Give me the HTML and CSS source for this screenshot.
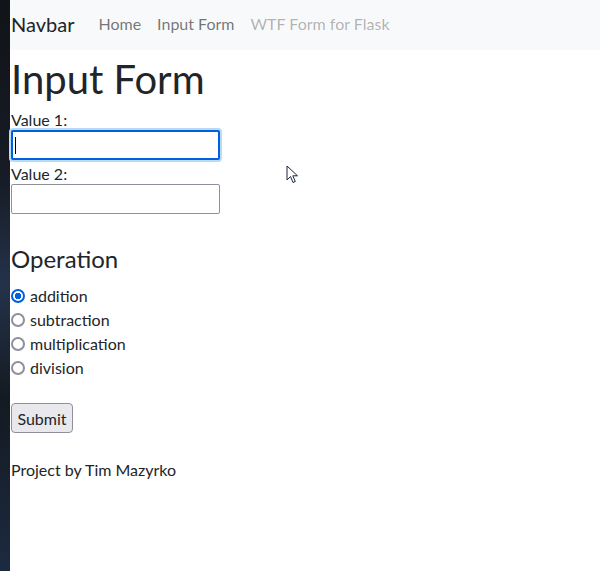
FILE: index.html
```html
<!DOCTYPE html>
<html>
<head>
<meta charset="utf-8">
<link rel="stylesheet" href="styles.css">
</head>
<body>
<div class="strip"></div>
<div class="page">
  <nav class="navbar">
    <span class="brand">Navbar</span>
    <a class="nav-link">Home</a>
    <a class="nav-link">Input Form</a>
    <a class="nav-link disabled">WTF Form for Flask</a>
  </nav>
  <main class="content">
    <h1 class="title">Input Form</h1>
    <form class="form">
      <label class="label first">Value 1:</label>
      <div class="field-wrap">
        <input class="field focused" type="text">
        <span class="caret"></span>
      </div>
      <label class="label">Value 2:</label>
      <input class="field" type="text">
      <h4 class="subtitle">Operation</h4>
      <div class="radios">
        <label class="radio"><input type="radio" name="op" checked> addition</label>
        <label class="radio"><input type="radio" name="op"> subtraction</label>
        <label class="radio"><input type="radio" name="op"> multiplication</label>
        <label class="radio"><input type="radio" name="op"> division</label>
      </div>
      <div class="actions"><button type="button" class="submit">Submit</button></div>
    </form>
    <p class="footer">Project by Tim Mazyrko</p>
  </main>
  <svg class="cursor" width="14" height="20" viewBox="0 0 14 20"><path d="M1 1 L1 15 L4.5 11.5 L7 17.5 L9.3 16.5 L6.8 10.8 L11.5 10.8 Z" fill="#fff" stroke="#1a2340" stroke-width="1"/></svg>
</div>
</body>
</html>
```
FILE: styles.css
```css
html, body {
  margin: 0;
  height: 100%;
}
body {
  display: flex;
  font-family: Lato, "Open Sans", sans-serif;
  color: #212529;
  font-size: 16px;
  background: #fff;
}
.strip {
  width: 10px;
  flex: none;
  background: linear-gradient(180deg, #111418 0%, #161b24 30%, #243249 50%, #141a22 70%, #1c2a40 100%);
}
.page {
  flex: 1;
  position: relative;
}
.navbar {
  height: 50px;
  box-sizing: border-box;
  padding: 0 0 3px 1px;
  background: #f8f9fa;
  display: flex;
  align-items: center;
}
.brand {
  font-size: 20px;
  margin-right: 16px;
  color: #212529;
}
.nav-link {
  padding: 0 8px;
  color: rgba(0,0,0,.55);
  font-size: 16px;
}
.nav-link.disabled {
  color: rgba(0,0,0,.3);
}
.content {
  padding-left: 1px;
}
.title {
  font-size: 40px;
  font-weight: 400;
  line-height: 48px;
  margin: 5px 0 0;
}
.form {
  display: flex;
  flex-direction: column;
  align-items: flex-start;
}
.label {
  line-height: 20px;
  padding-top: 4px;
}
.label.first {
  margin-top: 3px;
}
.field-wrap {
  position: relative;
}
.field {
  display: block;
  width: 209px;
  height: 30px;
  box-sizing: border-box;
  border: 1px solid #8f8f9d;
  border-radius: 2px;
  margin: 0;
  padding: 0 4px;
  font: inherit;
}
.field.focused {
  border: 2px solid #0060df;
  box-shadow: 0 0 0 2px #b6dcf7;
}
.caret {
  position: absolute;
  left: 4px;
  top: 7px;
  width: 1px;
  height: 17px;
  background: #000;
}
.subtitle {
  font-size: 24px;
  font-weight: 400;
  line-height: 29px;
  margin: 30px 0 11px;
}
.radios {
  display: flex;
  flex-direction: column;
}
.radio {
  line-height: 24px;
  display: flex;
  align-items: center;
  gap: 5px;
}
.radio input {
  appearance: none;
  margin: 0;
  width: 14px;
  height: 14px;
  box-sizing: border-box;
  border: 2px solid #8f8f9d;
  border-radius: 50%;
  background: #fff;
}
.radio input:checked {
  border-color: #0060df;
  background: radial-gradient(circle, #0060df 0 3px, #fff 3.5px);
}
.actions {
  margin-top: 23px;
}
.submit {
  font: inherit;
  height: 30px;
  width: 62px;
  padding: 0;
  background: #e9e9ed;
  border: 1px solid #8f8f9d;
  border-radius: 4px;
  color: #212529;
}
.footer {
  margin: 25px 0 0;
  line-height: 24px;
}
.cursor {
  position: absolute;
  left: 276px;
  top: 165px;
}
```
